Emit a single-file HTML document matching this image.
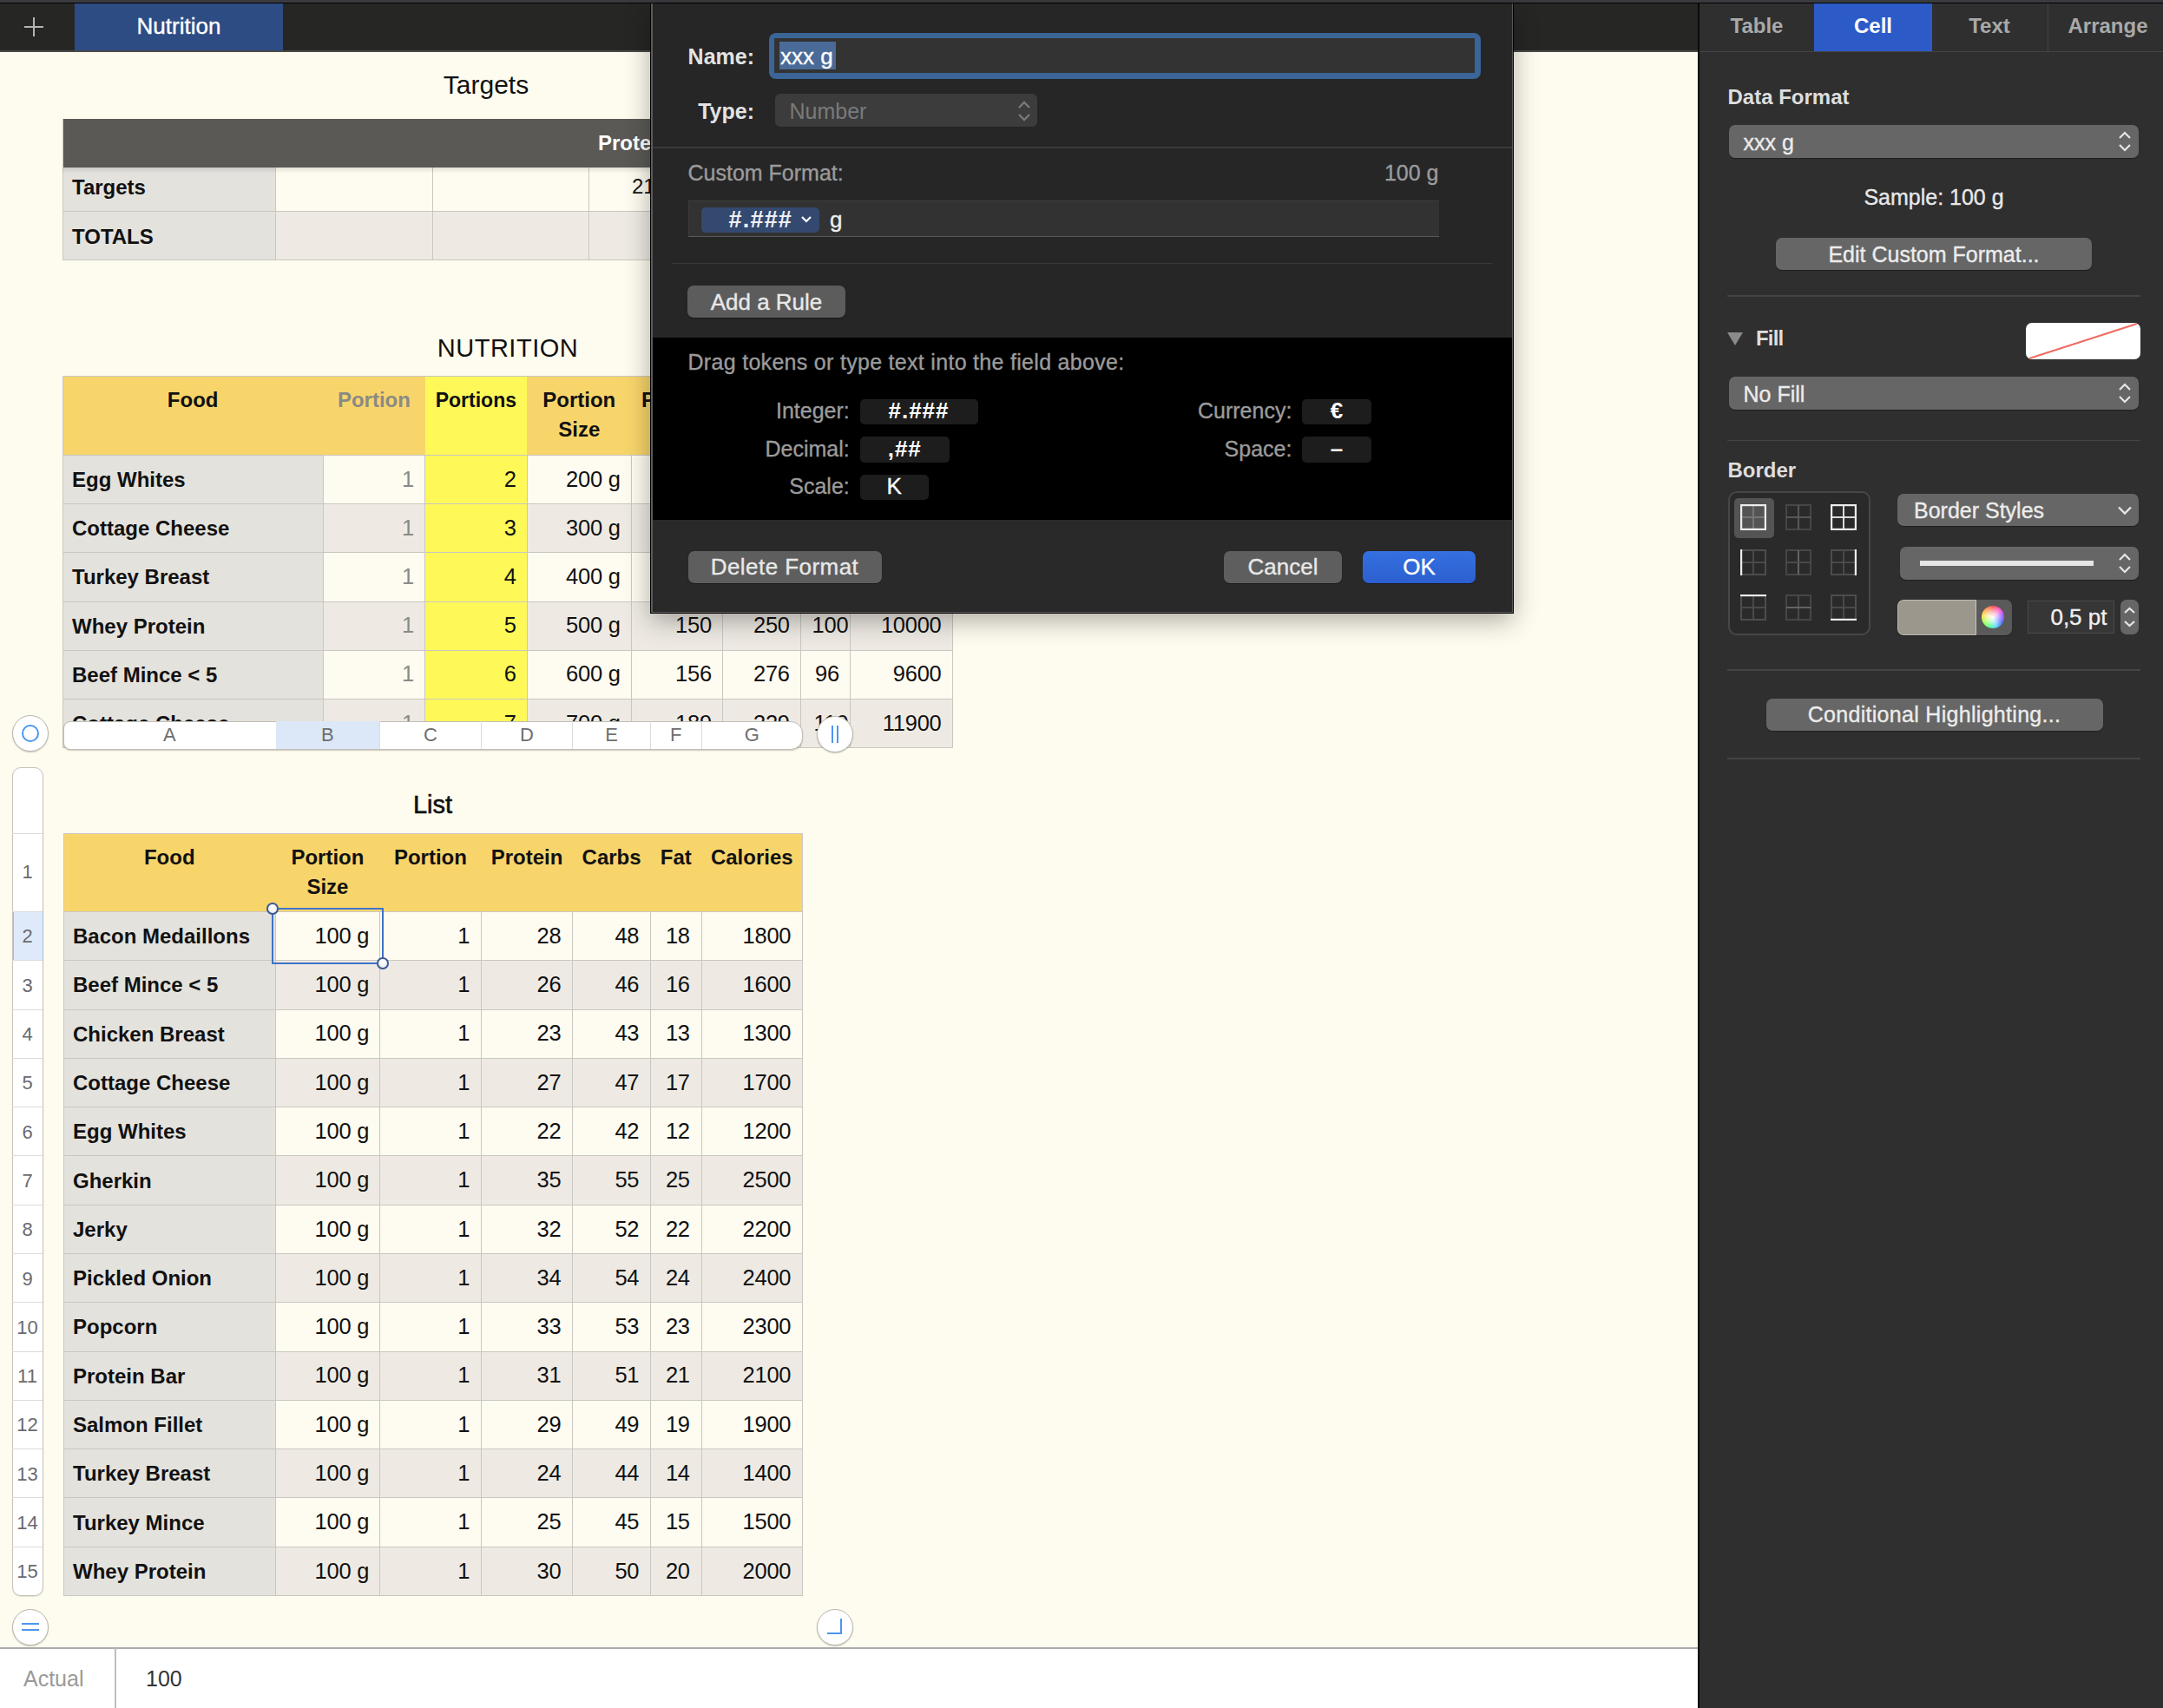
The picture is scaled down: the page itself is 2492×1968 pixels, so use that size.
<!DOCTYPE html><html><head><meta charset="utf-8"><style>
html,body{margin:0;padding:0;}
body{width:2492px;height:1968px;position:relative;overflow:hidden;background:#fefbef;font-family:"Liberation Sans", sans-serif;}
</style></head><body>
<div style="position:absolute;left:0.00px;top:0.00px;width:2492.00px;height:3.00px;background:#3a3b3e;"></div>
<div style="position:absolute;left:0.00px;top:3.00px;width:2492.00px;height:1.00px;background:#000;"></div>
<div style="position:absolute;left:0.00px;top:4.00px;width:1956.00px;height:54.00px;background:#262624;"></div>
<div style="position:absolute;left:0.00px;top:58.00px;width:1956.00px;height:1.50px;background:#4a4a4a;"></div>
<div style="position:absolute;left:28.00px;top:30.00px;width:22.00px;height:2.00px;background:#b5b5b5;"></div>
<div style="position:absolute;left:38.00px;top:20.00px;width:2.00px;height:22.00px;background:#b5b5b5;"></div>
<div style="position:absolute;left:86.00px;top:4.00px;width:240.00px;height:54.00px;background:#2d4c84;"></div>
<div style="position:absolute;left:-794.00px;width:2000px;text-align:center;top:16.99px;font-size:26px;line-height:26px;font-weight:400;color:#fff;white-space:pre;-webkit-text-stroke:0.35px #fff;">Nutrition</div>
<div style="position:absolute;left:-440.00px;width:2000px;text-align:center;top:83.11px;font-size:30px;line-height:30px;font-weight:400;color:#111;white-space:pre;">Targets</div>
<div style="position:absolute;left:72.00px;top:137.00px;width:828.00px;height:56.00px;background:#5a5955;"></div>
<div style="position:absolute;left:72.00px;top:193.00px;width:245.00px;height:106.50px;background:#e4e2dd;"></div>
<div style="position:absolute;left:317.00px;top:193.00px;width:583.00px;height:50.00px;background:#fefbf0;"></div>
<div style="position:absolute;left:317.00px;top:243.00px;width:583.00px;height:56.50px;background:#eeeae3;"></div>
<div style="position:absolute;left:72.00px;top:243.00px;width:828.00px;height:1.00px;background:#c9c7c1;"></div>
<div style="position:absolute;left:72.00px;top:298.50px;width:828.00px;height:1.00px;background:#c9c7c1;"></div>
<div style="position:absolute;left:317.00px;top:193.00px;width:1.00px;height:106.50px;background:#c9c7c1;"></div>
<div style="position:absolute;left:497.50px;top:193.00px;width:1.00px;height:106.50px;background:#c9c7c1;"></div>
<div style="position:absolute;left:677.50px;top:193.00px;width:1.00px;height:106.50px;background:#c9c7c1;"></div>
<div style="position:absolute;left:72.00px;top:137.00px;width:1.00px;height:162.50px;background:#c9c7c1;"></div>
<div style="position:absolute;left:72.00px;top:193.00px;width:828.00px;height:7.00px;background:linear-gradient(rgba(0,0,0,0.10),rgba(0,0,0,0));"></div>
<div style="position:absolute;left:83.00px;top:204.38px;font-size:24px;line-height:24px;font-weight:700;color:#111;white-space:pre;">Targets</div>
<div style="position:absolute;left:83.00px;top:260.68px;font-size:24px;line-height:24px;font-weight:700;color:#111;white-space:pre;">TOTALS</div>
<div style="position:absolute;left:689.00px;top:152.68px;font-size:24px;line-height:24px;font-weight:700;color:#fff;white-space:pre;">Protein</div>
<div style="position:absolute;left:728.00px;top:203.18px;font-size:24px;line-height:24px;font-weight:400;color:#111;white-space:pre;">2100</div>
<div style="position:absolute;left:-415.00px;width:2000px;text-align:center;top:386.95px;font-size:29px;line-height:29px;font-weight:400;color:#111;white-space:pre;letter-spacing:0.5px;">NUTRITION</div>
<div style="position:absolute;left:72.00px;top:433.00px;width:1025.20px;height:91.50px;background:#f8d56b;"></div>
<div style="position:absolute;left:489.50px;top:433.00px;width:117.70px;height:428.80px;background:#fef958;"></div>
<div style="position:absolute;left:72.00px;top:524.50px;width:300.30px;height:55.80px;background:#e4e2dd;"></div>
<div style="position:absolute;left:372.30px;top:524.50px;width:117.20px;height:55.80px;background:#fefbf0;"></div>
<div style="position:absolute;left:607.20px;top:524.50px;width:490.00px;height:55.80px;background:#fefbf0;"></div>
<div style="position:absolute;left:72.00px;top:580.30px;width:300.30px;height:56.20px;background:#e4e2dd;"></div>
<div style="position:absolute;left:372.30px;top:580.30px;width:117.20px;height:56.20px;background:#eeeae3;"></div>
<div style="position:absolute;left:607.20px;top:580.30px;width:490.00px;height:56.20px;background:#eeeae3;"></div>
<div style="position:absolute;left:72.00px;top:636.50px;width:300.30px;height:56.50px;background:#e4e2dd;"></div>
<div style="position:absolute;left:372.30px;top:636.50px;width:117.20px;height:56.50px;background:#fefbf0;"></div>
<div style="position:absolute;left:607.20px;top:636.50px;width:490.00px;height:56.50px;background:#fefbf0;"></div>
<div style="position:absolute;left:72.00px;top:693.00px;width:300.30px;height:56.10px;background:#e4e2dd;"></div>
<div style="position:absolute;left:372.30px;top:693.00px;width:117.20px;height:56.10px;background:#eeeae3;"></div>
<div style="position:absolute;left:607.20px;top:693.00px;width:490.00px;height:56.10px;background:#eeeae3;"></div>
<div style="position:absolute;left:72.00px;top:749.10px;width:300.30px;height:56.20px;background:#e4e2dd;"></div>
<div style="position:absolute;left:372.30px;top:749.10px;width:117.20px;height:56.20px;background:#fefbf0;"></div>
<div style="position:absolute;left:607.20px;top:749.10px;width:490.00px;height:56.20px;background:#fefbf0;"></div>
<div style="position:absolute;left:72.00px;top:805.30px;width:300.30px;height:56.50px;background:#e4e2dd;"></div>
<div style="position:absolute;left:372.30px;top:805.30px;width:117.20px;height:56.50px;background:#eeeae3;"></div>
<div style="position:absolute;left:607.20px;top:805.30px;width:490.00px;height:56.50px;background:#eeeae3;"></div>
<div style="position:absolute;left:72.00px;top:433.00px;width:1025.20px;height:1.00px;background:#c9c7c1;"></div>
<div style="position:absolute;left:72.00px;top:524.00px;width:1025.20px;height:1.00px;background:#c9c7c1;"></div>
<div style="position:absolute;left:72.00px;top:579.80px;width:1025.20px;height:1.00px;background:#c9c7c1;"></div>
<div style="position:absolute;left:72.00px;top:636.00px;width:1025.20px;height:1.00px;background:#c9c7c1;"></div>
<div style="position:absolute;left:72.00px;top:692.50px;width:1025.20px;height:1.00px;background:#c9c7c1;"></div>
<div style="position:absolute;left:72.00px;top:748.60px;width:1025.20px;height:1.00px;background:#c9c7c1;"></div>
<div style="position:absolute;left:72.00px;top:804.80px;width:1025.20px;height:1.00px;background:#c9c7c1;"></div>
<div style="position:absolute;left:72.00px;top:861.30px;width:1025.20px;height:1.00px;background:#c9c7c1;"></div>
<div style="position:absolute;left:71.50px;top:524.50px;width:1.00px;height:337.30px;background:#c9c7c1;"></div>
<div style="position:absolute;left:371.80px;top:524.50px;width:1.00px;height:337.30px;background:#c9c7c1;"></div>
<div style="position:absolute;left:489.00px;top:524.50px;width:1.00px;height:337.30px;background:#c9c7c1;"></div>
<div style="position:absolute;left:606.70px;top:524.50px;width:1.00px;height:337.30px;background:#c9c7c1;"></div>
<div style="position:absolute;left:726.80px;top:524.50px;width:1.00px;height:337.30px;background:#c9c7c1;"></div>
<div style="position:absolute;left:832.00px;top:524.50px;width:1.00px;height:337.30px;background:#c9c7c1;"></div>
<div style="position:absolute;left:921.90px;top:524.50px;width:1.00px;height:337.30px;background:#c9c7c1;"></div>
<div style="position:absolute;left:979.10px;top:524.50px;width:1.00px;height:337.30px;background:#c9c7c1;"></div>
<div style="position:absolute;left:1096.70px;top:524.50px;width:1.00px;height:337.30px;background:#c9c7c1;"></div>
<div style="position:absolute;left:71.50px;top:433.00px;width:1.00px;height:91.50px;background:#c9c7c1;"></div>
<div style="position:absolute;left:1096.70px;top:433.00px;width:1.00px;height:91.50px;background:#c9c7c1;"></div>
<div style="position:absolute;left:-777.85px;width:2000px;text-align:center;top:448.68px;font-size:24px;line-height:24px;font-weight:700;color:#111;white-space:pre;">Food</div>
<div style="position:absolute;left:-569.10px;width:2000px;text-align:center;top:448.68px;font-size:24px;line-height:24px;font-weight:700;color:#8a8a86;white-space:pre;">Portion</div>
<div style="position:absolute;left:-451.65px;width:2000px;text-align:center;top:449.53px;font-size:23px;line-height:23px;font-weight:700;color:#111;white-space:pre;">Portions</div>
<div style="position:absolute;left:-332.75px;width:2000px;text-align:center;top:448.68px;font-size:24px;line-height:24px;font-weight:700;color:#111;white-space:pre;">Portion</div>
<div style="position:absolute;left:-332.75px;width:2000px;text-align:center;top:482.68px;font-size:24px;line-height:24px;font-weight:700;color:#111;white-space:pre;">Size</div>
<div style="position:absolute;left:739.00px;top:448.68px;font-size:24px;line-height:24px;font-weight:700;color:#111;white-space:pre;">P</div>
<div style="position:absolute;left:83.00px;top:540.88px;font-size:24px;line-height:24px;font-weight:700;color:#111;white-space:pre;">Egg Whites</div>
<div style="position:absolute;left:-523.15px;width:1000px;text-align:right;top:539.61px;font-size:25.5px;line-height:25.5px;font-weight:400;color:#8a8a86;white-space:pre;letter-spacing:-0.25px;">1</div>
<div style="position:absolute;left:-405.45px;width:1000px;text-align:right;top:539.61px;font-size:25.5px;line-height:25.5px;font-weight:400;color:#111;white-space:pre;letter-spacing:-0.25px;">2</div>
<div style="position:absolute;left:-285.35px;width:1000px;text-align:right;top:539.61px;font-size:25.5px;line-height:25.5px;font-weight:400;color:#111;white-space:pre;letter-spacing:-0.25px;">200 g</div>
<div style="position:absolute;left:83.00px;top:596.88px;font-size:24px;line-height:24px;font-weight:700;color:#111;white-space:pre;">Cottage Cheese</div>
<div style="position:absolute;left:-523.15px;width:1000px;text-align:right;top:595.61px;font-size:25.5px;line-height:25.5px;font-weight:400;color:#8a8a86;white-space:pre;letter-spacing:-0.25px;">1</div>
<div style="position:absolute;left:-405.45px;width:1000px;text-align:right;top:595.61px;font-size:25.5px;line-height:25.5px;font-weight:400;color:#111;white-space:pre;letter-spacing:-0.25px;">3</div>
<div style="position:absolute;left:-285.35px;width:1000px;text-align:right;top:595.61px;font-size:25.5px;line-height:25.5px;font-weight:400;color:#111;white-space:pre;letter-spacing:-0.25px;">300 g</div>
<div style="position:absolute;left:83.00px;top:653.23px;font-size:24px;line-height:24px;font-weight:700;color:#111;white-space:pre;">Turkey Breast</div>
<div style="position:absolute;left:-523.15px;width:1000px;text-align:right;top:651.96px;font-size:25.5px;line-height:25.5px;font-weight:400;color:#8a8a86;white-space:pre;letter-spacing:-0.25px;">1</div>
<div style="position:absolute;left:-405.45px;width:1000px;text-align:right;top:651.96px;font-size:25.5px;line-height:25.5px;font-weight:400;color:#111;white-space:pre;letter-spacing:-0.25px;">4</div>
<div style="position:absolute;left:-285.35px;width:1000px;text-align:right;top:651.96px;font-size:25.5px;line-height:25.5px;font-weight:400;color:#111;white-space:pre;letter-spacing:-0.25px;">400 g</div>
<div style="position:absolute;left:83.00px;top:709.53px;font-size:24px;line-height:24px;font-weight:700;color:#111;white-space:pre;">Whey Protein</div>
<div style="position:absolute;left:-523.15px;width:1000px;text-align:right;top:708.26px;font-size:25.5px;line-height:25.5px;font-weight:400;color:#8a8a86;white-space:pre;letter-spacing:-0.25px;">1</div>
<div style="position:absolute;left:-405.45px;width:1000px;text-align:right;top:708.26px;font-size:25.5px;line-height:25.5px;font-weight:400;color:#111;white-space:pre;letter-spacing:-0.25px;">5</div>
<div style="position:absolute;left:-285.35px;width:1000px;text-align:right;top:708.26px;font-size:25.5px;line-height:25.5px;font-weight:400;color:#111;white-space:pre;letter-spacing:-0.25px;">500 g</div>
<div style="position:absolute;left:-180.15px;width:1000px;text-align:right;top:708.26px;font-size:25.5px;line-height:25.5px;font-weight:400;color:#111;white-space:pre;letter-spacing:-0.25px;">150</div>
<div style="position:absolute;left:-90.25px;width:1000px;text-align:right;top:708.26px;font-size:25.5px;line-height:25.5px;font-weight:400;color:#111;white-space:pre;letter-spacing:-0.25px;">250</div>
<div style="position:absolute;left:-22.65px;width:1000px;text-align:right;top:708.26px;font-size:25.5px;line-height:25.5px;font-weight:400;color:#111;white-space:pre;letter-spacing:-0.25px;">100</div>
<div style="position:absolute;left:84.55px;width:1000px;text-align:right;top:708.26px;font-size:25.5px;line-height:25.5px;font-weight:400;color:#111;white-space:pre;letter-spacing:-0.25px;">10000</div>
<div style="position:absolute;left:83.00px;top:765.68px;font-size:24px;line-height:24px;font-weight:700;color:#111;white-space:pre;">Beef Mince &lt; 5</div>
<div style="position:absolute;left:-523.15px;width:1000px;text-align:right;top:764.41px;font-size:25.5px;line-height:25.5px;font-weight:400;color:#8a8a86;white-space:pre;letter-spacing:-0.25px;">1</div>
<div style="position:absolute;left:-405.45px;width:1000px;text-align:right;top:764.41px;font-size:25.5px;line-height:25.5px;font-weight:400;color:#111;white-space:pre;letter-spacing:-0.25px;">6</div>
<div style="position:absolute;left:-285.35px;width:1000px;text-align:right;top:764.41px;font-size:25.5px;line-height:25.5px;font-weight:400;color:#111;white-space:pre;letter-spacing:-0.25px;">600 g</div>
<div style="position:absolute;left:-180.15px;width:1000px;text-align:right;top:764.41px;font-size:25.5px;line-height:25.5px;font-weight:400;color:#111;white-space:pre;letter-spacing:-0.25px;">156</div>
<div style="position:absolute;left:-90.25px;width:1000px;text-align:right;top:764.41px;font-size:25.5px;line-height:25.5px;font-weight:400;color:#111;white-space:pre;letter-spacing:-0.25px;">276</div>
<div style="position:absolute;left:-33.05px;width:1000px;text-align:right;top:764.41px;font-size:25.5px;line-height:25.5px;font-weight:400;color:#111;white-space:pre;letter-spacing:-0.25px;">96</div>
<div style="position:absolute;left:84.55px;width:1000px;text-align:right;top:764.41px;font-size:25.5px;line-height:25.5px;font-weight:400;color:#111;white-space:pre;letter-spacing:-0.25px;">9600</div>
<div style="position:absolute;left:83.00px;top:822.03px;font-size:24px;line-height:24px;font-weight:700;color:#111;white-space:pre;">Cottage Cheese</div>
<div style="position:absolute;left:-523.15px;width:1000px;text-align:right;top:820.76px;font-size:25.5px;line-height:25.5px;font-weight:400;color:#8a8a86;white-space:pre;letter-spacing:-0.25px;">1</div>
<div style="position:absolute;left:-405.45px;width:1000px;text-align:right;top:820.76px;font-size:25.5px;line-height:25.5px;font-weight:400;color:#111;white-space:pre;letter-spacing:-0.25px;">7</div>
<div style="position:absolute;left:-285.35px;width:1000px;text-align:right;top:820.76px;font-size:25.5px;line-height:25.5px;font-weight:400;color:#111;white-space:pre;letter-spacing:-0.25px;">700 g</div>
<div style="position:absolute;left:-180.15px;width:1000px;text-align:right;top:820.76px;font-size:25.5px;line-height:25.5px;font-weight:400;color:#111;white-space:pre;letter-spacing:-0.25px;">189</div>
<div style="position:absolute;left:-90.25px;width:1000px;text-align:right;top:820.76px;font-size:25.5px;line-height:25.5px;font-weight:400;color:#111;white-space:pre;letter-spacing:-0.25px;">329</div>
<div style="position:absolute;left:-22.65px;width:1000px;text-align:right;top:820.76px;font-size:25.5px;line-height:25.5px;font-weight:400;color:#111;white-space:pre;letter-spacing:-0.25px;">119</div>
<div style="position:absolute;left:84.55px;width:1000px;text-align:right;top:820.76px;font-size:25.5px;line-height:25.5px;font-weight:400;color:#111;white-space:pre;letter-spacing:-0.25px;">11900</div>
<div style="position:absolute;left:72.50px;top:830.50px;width:852.50px;height:33.00px;background:#fff;border-radius:8px 14px 14px 8px;border:1px solid #c2beb5;box-sizing:border-box;box-shadow:0 1px 1.5px rgba(0,0,0,0.2);"></div>
<div style="position:absolute;left:317.50px;top:831.00px;width:119.90px;height:32.00px;background:#dce8f8;"></div>
<div style="position:absolute;left:436.90px;top:831.00px;width:1.00px;height:32.00px;background:#dcdcdc;"></div>
<div style="position:absolute;left:553.90px;top:831.00px;width:1.00px;height:32.00px;background:#dcdcdc;"></div>
<div style="position:absolute;left:659.10px;top:831.00px;width:1.00px;height:32.00px;background:#dcdcdc;"></div>
<div style="position:absolute;left:749.00px;top:831.00px;width:1.00px;height:32.00px;background:#dcdcdc;"></div>
<div style="position:absolute;left:807.50px;top:831.00px;width:1.00px;height:32.00px;background:#dcdcdc;"></div>
<div style="position:absolute;left:-804.75px;width:2000px;text-align:center;top:836.38px;font-size:22px;line-height:22px;font-weight:400;color:#6e6e6e;white-space:pre;">A</div>
<div style="position:absolute;left:-622.55px;width:2000px;text-align:center;top:836.38px;font-size:22px;line-height:22px;font-weight:400;color:#6e6e6e;white-space:pre;">B</div>
<div style="position:absolute;left:-504.10px;width:2000px;text-align:center;top:836.38px;font-size:22px;line-height:22px;font-weight:400;color:#6e6e6e;white-space:pre;">C</div>
<div style="position:absolute;left:-393.00px;width:2000px;text-align:center;top:836.38px;font-size:22px;line-height:22px;font-weight:400;color:#6e6e6e;white-space:pre;">D</div>
<div style="position:absolute;left:-295.45px;width:2000px;text-align:center;top:836.38px;font-size:22px;line-height:22px;font-weight:400;color:#6e6e6e;white-space:pre;">E</div>
<div style="position:absolute;left:-221.25px;width:2000px;text-align:center;top:836.38px;font-size:22px;line-height:22px;font-weight:400;color:#6e6e6e;white-space:pre;">F</div>
<div style="position:absolute;left:-133.75px;width:2000px;text-align:center;top:836.38px;font-size:22px;line-height:22px;font-weight:400;color:#6e6e6e;white-space:pre;">G</div>
<div style="position:absolute;left:14px;top:824px;width:42px;height:42px;box-sizing:border-box;border-radius:50%;background:#fff;border:1px solid #bcb7ad;box-shadow:0 1px 1.5px rgba(0,0,0,0.2);"></div>
<div style="position:absolute;left:25px;top:835px;width:16px;height:16px;border-radius:50%;border:2px solid #4d96ee;"></div>
<div style="position:absolute;left:941px;top:825px;width:42px;height:42px;box-sizing:border-box;border-radius:50%;background:#fff;border:1px solid #bcb7ad;box-shadow:0 1px 1.5px rgba(0,0,0,0.2);"></div>
<div style="position:absolute;left:958.00px;top:836.00px;width:2.00px;height:20.00px;background:#4d96ee;"></div>
<div style="position:absolute;left:964.00px;top:836.00px;width:2.00px;height:20.00px;background:#4d96ee;"></div>
<div style="position:absolute;left:-501.50px;width:2000px;text-align:center;top:913.45px;font-size:29px;line-height:29px;font-weight:400;color:#111;white-space:pre;-webkit-text-stroke:0.6px #111;">List</div>
<div style="position:absolute;left:14px;top:884px;width:36px;height:954.5px;box-sizing:border-box;background:#fff;border-radius:10px;border:1px solid #c6c2b9;box-shadow:0 1px 1px rgba(0,0,0,0.12);"></div>
<div style="position:absolute;left:14.50px;top:1050.00px;width:35.00px;height:56.60px;background:#deeafa;border:1px solid #a9bdd8;box-sizing:border-box;"></div>
<div style="position:absolute;left:14.00px;top:959.50px;width:35.00px;height:1.00px;background:#dcdcdc;"></div>
<div style="position:absolute;left:14.00px;top:1049.50px;width:35.00px;height:1.00px;background:#dcdcdc;"></div>
<div style="position:absolute;left:14.00px;top:1106.29px;width:35.00px;height:1.00px;background:#dcdcdc;"></div>
<div style="position:absolute;left:14.00px;top:1162.58px;width:35.00px;height:1.00px;background:#dcdcdc;"></div>
<div style="position:absolute;left:14.00px;top:1218.87px;width:35.00px;height:1.00px;background:#dcdcdc;"></div>
<div style="position:absolute;left:14.00px;top:1275.16px;width:35.00px;height:1.00px;background:#dcdcdc;"></div>
<div style="position:absolute;left:14.00px;top:1331.45px;width:35.00px;height:1.00px;background:#dcdcdc;"></div>
<div style="position:absolute;left:14.00px;top:1387.74px;width:35.00px;height:1.00px;background:#dcdcdc;"></div>
<div style="position:absolute;left:14.00px;top:1444.03px;width:35.00px;height:1.00px;background:#dcdcdc;"></div>
<div style="position:absolute;left:14.00px;top:1500.32px;width:35.00px;height:1.00px;background:#dcdcdc;"></div>
<div style="position:absolute;left:14.00px;top:1556.61px;width:35.00px;height:1.00px;background:#dcdcdc;"></div>
<div style="position:absolute;left:14.00px;top:1612.90px;width:35.00px;height:1.00px;background:#dcdcdc;"></div>
<div style="position:absolute;left:14.00px;top:1669.19px;width:35.00px;height:1.00px;background:#dcdcdc;"></div>
<div style="position:absolute;left:14.00px;top:1725.48px;width:35.00px;height:1.00px;background:#dcdcdc;"></div>
<div style="position:absolute;left:14.00px;top:1781.77px;width:35.00px;height:1.00px;background:#dcdcdc;"></div>
<div style="position:absolute;left:-968.50px;width:2000px;text-align:center;top:994.38px;font-size:22px;line-height:22px;font-weight:400;color:#6a6a70;white-space:pre;">1</div>
<div style="position:absolute;left:-968.50px;width:2000px;text-align:center;top:1068.27px;font-size:22px;line-height:22px;font-weight:400;color:#6a6a70;white-space:pre;">2</div>
<div style="position:absolute;left:-968.50px;width:2000px;text-align:center;top:1124.81px;font-size:22px;line-height:22px;font-weight:400;color:#6a6a70;white-space:pre;">3</div>
<div style="position:absolute;left:-968.50px;width:2000px;text-align:center;top:1181.10px;font-size:22px;line-height:22px;font-weight:400;color:#6a6a70;white-space:pre;">4</div>
<div style="position:absolute;left:-968.50px;width:2000px;text-align:center;top:1237.39px;font-size:22px;line-height:22px;font-weight:400;color:#6a6a70;white-space:pre;">5</div>
<div style="position:absolute;left:-968.50px;width:2000px;text-align:center;top:1293.68px;font-size:22px;line-height:22px;font-weight:400;color:#6a6a70;white-space:pre;">6</div>
<div style="position:absolute;left:-968.50px;width:2000px;text-align:center;top:1349.97px;font-size:22px;line-height:22px;font-weight:400;color:#6a6a70;white-space:pre;">7</div>
<div style="position:absolute;left:-968.50px;width:2000px;text-align:center;top:1406.26px;font-size:22px;line-height:22px;font-weight:400;color:#6a6a70;white-space:pre;">8</div>
<div style="position:absolute;left:-968.50px;width:2000px;text-align:center;top:1462.55px;font-size:22px;line-height:22px;font-weight:400;color:#6a6a70;white-space:pre;">9</div>
<div style="position:absolute;left:-968.50px;width:2000px;text-align:center;top:1518.84px;font-size:22px;line-height:22px;font-weight:400;color:#6a6a70;white-space:pre;">10</div>
<div style="position:absolute;left:-968.50px;width:2000px;text-align:center;top:1575.13px;font-size:22px;line-height:22px;font-weight:400;color:#6a6a70;white-space:pre;">11</div>
<div style="position:absolute;left:-968.50px;width:2000px;text-align:center;top:1631.42px;font-size:22px;line-height:22px;font-weight:400;color:#6a6a70;white-space:pre;">12</div>
<div style="position:absolute;left:-968.50px;width:2000px;text-align:center;top:1687.71px;font-size:22px;line-height:22px;font-weight:400;color:#6a6a70;white-space:pre;">13</div>
<div style="position:absolute;left:-968.50px;width:2000px;text-align:center;top:1744.00px;font-size:22px;line-height:22px;font-weight:400;color:#6a6a70;white-space:pre;">14</div>
<div style="position:absolute;left:-968.50px;width:2000px;text-align:center;top:1800.29px;font-size:22px;line-height:22px;font-weight:400;color:#6a6a70;white-space:pre;">15</div>
<div style="position:absolute;left:73.00px;top:960.00px;width:851.50px;height:90.00px;background:#f8d56b;"></div>
<div style="position:absolute;left:73.00px;top:1050.00px;width:244.50px;height:56.79px;background:#e4e2dd;"></div>
<div style="position:absolute;left:317.50px;top:1050.00px;width:607.00px;height:56.79px;background:#fefbf0;"></div>
<div style="position:absolute;left:73.00px;top:1106.79px;width:244.50px;height:56.29px;background:#e4e2dd;"></div>
<div style="position:absolute;left:317.50px;top:1106.79px;width:607.00px;height:56.29px;background:#eeeae3;"></div>
<div style="position:absolute;left:73.00px;top:1163.08px;width:244.50px;height:56.29px;background:#e4e2dd;"></div>
<div style="position:absolute;left:317.50px;top:1163.08px;width:607.00px;height:56.29px;background:#fefbf0;"></div>
<div style="position:absolute;left:73.00px;top:1219.37px;width:244.50px;height:56.29px;background:#e4e2dd;"></div>
<div style="position:absolute;left:317.50px;top:1219.37px;width:607.00px;height:56.29px;background:#eeeae3;"></div>
<div style="position:absolute;left:73.00px;top:1275.66px;width:244.50px;height:56.29px;background:#e4e2dd;"></div>
<div style="position:absolute;left:317.50px;top:1275.66px;width:607.00px;height:56.29px;background:#fefbf0;"></div>
<div style="position:absolute;left:73.00px;top:1331.95px;width:244.50px;height:56.29px;background:#e4e2dd;"></div>
<div style="position:absolute;left:317.50px;top:1331.95px;width:607.00px;height:56.29px;background:#eeeae3;"></div>
<div style="position:absolute;left:73.00px;top:1388.24px;width:244.50px;height:56.29px;background:#e4e2dd;"></div>
<div style="position:absolute;left:317.50px;top:1388.24px;width:607.00px;height:56.29px;background:#fefbf0;"></div>
<div style="position:absolute;left:73.00px;top:1444.53px;width:244.50px;height:56.29px;background:#e4e2dd;"></div>
<div style="position:absolute;left:317.50px;top:1444.53px;width:607.00px;height:56.29px;background:#eeeae3;"></div>
<div style="position:absolute;left:73.00px;top:1500.82px;width:244.50px;height:56.29px;background:#e4e2dd;"></div>
<div style="position:absolute;left:317.50px;top:1500.82px;width:607.00px;height:56.29px;background:#fefbf0;"></div>
<div style="position:absolute;left:73.00px;top:1557.11px;width:244.50px;height:56.29px;background:#e4e2dd;"></div>
<div style="position:absolute;left:317.50px;top:1557.11px;width:607.00px;height:56.29px;background:#eeeae3;"></div>
<div style="position:absolute;left:73.00px;top:1613.40px;width:244.50px;height:56.29px;background:#e4e2dd;"></div>
<div style="position:absolute;left:317.50px;top:1613.40px;width:607.00px;height:56.29px;background:#fefbf0;"></div>
<div style="position:absolute;left:73.00px;top:1669.69px;width:244.50px;height:56.29px;background:#e4e2dd;"></div>
<div style="position:absolute;left:317.50px;top:1669.69px;width:607.00px;height:56.29px;background:#eeeae3;"></div>
<div style="position:absolute;left:73.00px;top:1725.98px;width:244.50px;height:56.29px;background:#e4e2dd;"></div>
<div style="position:absolute;left:317.50px;top:1725.98px;width:607.00px;height:56.29px;background:#fefbf0;"></div>
<div style="position:absolute;left:73.00px;top:1782.27px;width:244.50px;height:56.29px;background:#e4e2dd;"></div>
<div style="position:absolute;left:317.50px;top:1782.27px;width:607.00px;height:56.29px;background:#eeeae3;"></div>
<div style="position:absolute;left:73.00px;top:959.50px;width:851.50px;height:1.00px;background:#c9c7c1;"></div>
<div style="position:absolute;left:73.00px;top:1049.50px;width:851.50px;height:1.00px;background:#c9c7c1;"></div>
<div style="position:absolute;left:73.00px;top:1106.29px;width:851.50px;height:1.00px;background:#c9c7c1;"></div>
<div style="position:absolute;left:73.00px;top:1162.58px;width:851.50px;height:1.00px;background:#c9c7c1;"></div>
<div style="position:absolute;left:73.00px;top:1218.87px;width:851.50px;height:1.00px;background:#c9c7c1;"></div>
<div style="position:absolute;left:73.00px;top:1275.16px;width:851.50px;height:1.00px;background:#c9c7c1;"></div>
<div style="position:absolute;left:73.00px;top:1331.45px;width:851.50px;height:1.00px;background:#c9c7c1;"></div>
<div style="position:absolute;left:73.00px;top:1387.74px;width:851.50px;height:1.00px;background:#c9c7c1;"></div>
<div style="position:absolute;left:73.00px;top:1444.03px;width:851.50px;height:1.00px;background:#c9c7c1;"></div>
<div style="position:absolute;left:73.00px;top:1500.32px;width:851.50px;height:1.00px;background:#c9c7c1;"></div>
<div style="position:absolute;left:73.00px;top:1556.61px;width:851.50px;height:1.00px;background:#c9c7c1;"></div>
<div style="position:absolute;left:73.00px;top:1612.90px;width:851.50px;height:1.00px;background:#c9c7c1;"></div>
<div style="position:absolute;left:73.00px;top:1669.19px;width:851.50px;height:1.00px;background:#c9c7c1;"></div>
<div style="position:absolute;left:73.00px;top:1725.48px;width:851.50px;height:1.00px;background:#c9c7c1;"></div>
<div style="position:absolute;left:73.00px;top:1781.77px;width:851.50px;height:1.00px;background:#c9c7c1;"></div>
<div style="position:absolute;left:73.00px;top:1838.06px;width:851.50px;height:1.00px;background:#c9c7c1;"></div>
<div style="position:absolute;left:72.50px;top:1050.00px;width:1.00px;height:789.06px;background:#c9c7c1;"></div>
<div style="position:absolute;left:317.00px;top:1050.00px;width:1.00px;height:789.06px;background:#c9c7c1;"></div>
<div style="position:absolute;left:436.90px;top:1050.00px;width:1.00px;height:789.06px;background:#c9c7c1;"></div>
<div style="position:absolute;left:553.90px;top:1050.00px;width:1.00px;height:789.06px;background:#c9c7c1;"></div>
<div style="position:absolute;left:659.10px;top:1050.00px;width:1.00px;height:789.06px;background:#c9c7c1;"></div>
<div style="position:absolute;left:749.00px;top:1050.00px;width:1.00px;height:789.06px;background:#c9c7c1;"></div>
<div style="position:absolute;left:807.50px;top:1050.00px;width:1.00px;height:789.06px;background:#c9c7c1;"></div>
<div style="position:absolute;left:924.00px;top:1050.00px;width:1.00px;height:789.06px;background:#c9c7c1;"></div>
<div style="position:absolute;left:72.50px;top:960.00px;width:1.00px;height:90.00px;background:#c9c7c1;"></div>
<div style="position:absolute;left:924.00px;top:960.00px;width:1.00px;height:90.00px;background:#c9c7c1;"></div>
<div style="position:absolute;left:-804.75px;width:2000px;text-align:center;top:976.28px;font-size:24px;line-height:24px;font-weight:700;color:#111;white-space:pre;">Food</div>
<div style="position:absolute;left:-622.55px;width:2000px;text-align:center;top:976.28px;font-size:24px;line-height:24px;font-weight:700;color:#111;white-space:pre;">Portion</div>
<div style="position:absolute;left:-622.55px;width:2000px;text-align:center;top:1010.28px;font-size:24px;line-height:24px;font-weight:700;color:#111;white-space:pre;">Size</div>
<div style="position:absolute;left:-504.10px;width:2000px;text-align:center;top:976.28px;font-size:24px;line-height:24px;font-weight:700;color:#111;white-space:pre;">Portion</div>
<div style="position:absolute;left:-393.00px;width:2000px;text-align:center;top:976.28px;font-size:24px;line-height:24px;font-weight:700;color:#111;white-space:pre;">Protein</div>
<div style="position:absolute;left:-295.45px;width:2000px;text-align:center;top:976.28px;font-size:24px;line-height:24px;font-weight:700;color:#111;white-space:pre;">Carbs</div>
<div style="position:absolute;left:-221.25px;width:2000px;text-align:center;top:976.28px;font-size:24px;line-height:24px;font-weight:700;color:#111;white-space:pre;">Fat</div>
<div style="position:absolute;left:-133.75px;width:2000px;text-align:center;top:976.28px;font-size:24px;line-height:24px;font-weight:700;color:#111;white-space:pre;">Calories</div>
<div style="position:absolute;left:84.00px;top:1066.88px;font-size:24px;line-height:24px;font-weight:700;color:#111;white-space:pre;">Bacon Medaillons</div>
<div style="position:absolute;left:-574.85px;width:1000px;text-align:right;top:1065.61px;font-size:25.5px;line-height:25.5px;font-weight:400;color:#111;white-space:pre;letter-spacing:-0.25px;">100 g</div>
<div style="position:absolute;left:-458.85px;width:1000px;text-align:right;top:1065.61px;font-size:25.5px;line-height:25.5px;font-weight:400;color:#111;white-space:pre;letter-spacing:-0.25px;">1</div>
<div style="position:absolute;left:-353.65px;width:1000px;text-align:right;top:1065.61px;font-size:25.5px;line-height:25.5px;font-weight:400;color:#111;white-space:pre;letter-spacing:-0.25px;">28</div>
<div style="position:absolute;left:-263.75px;width:1000px;text-align:right;top:1065.61px;font-size:25.5px;line-height:25.5px;font-weight:400;color:#111;white-space:pre;letter-spacing:-0.25px;">48</div>
<div style="position:absolute;left:-205.25px;width:1000px;text-align:right;top:1065.61px;font-size:25.5px;line-height:25.5px;font-weight:400;color:#111;white-space:pre;letter-spacing:-0.25px;">18</div>
<div style="position:absolute;left:-88.75px;width:1000px;text-align:right;top:1065.61px;font-size:25.5px;line-height:25.5px;font-weight:400;color:#111;white-space:pre;letter-spacing:-0.25px;">1800</div>
<div style="position:absolute;left:84.00px;top:1123.42px;font-size:24px;line-height:24px;font-weight:700;color:#111;white-space:pre;">Beef Mince &lt; 5</div>
<div style="position:absolute;left:-574.85px;width:1000px;text-align:right;top:1122.15px;font-size:25.5px;line-height:25.5px;font-weight:400;color:#111;white-space:pre;letter-spacing:-0.25px;">100 g</div>
<div style="position:absolute;left:-458.85px;width:1000px;text-align:right;top:1122.15px;font-size:25.5px;line-height:25.5px;font-weight:400;color:#111;white-space:pre;letter-spacing:-0.25px;">1</div>
<div style="position:absolute;left:-353.65px;width:1000px;text-align:right;top:1122.15px;font-size:25.5px;line-height:25.5px;font-weight:400;color:#111;white-space:pre;letter-spacing:-0.25px;">26</div>
<div style="position:absolute;left:-263.75px;width:1000px;text-align:right;top:1122.15px;font-size:25.5px;line-height:25.5px;font-weight:400;color:#111;white-space:pre;letter-spacing:-0.25px;">46</div>
<div style="position:absolute;left:-205.25px;width:1000px;text-align:right;top:1122.15px;font-size:25.5px;line-height:25.5px;font-weight:400;color:#111;white-space:pre;letter-spacing:-0.25px;">16</div>
<div style="position:absolute;left:-88.75px;width:1000px;text-align:right;top:1122.15px;font-size:25.5px;line-height:25.5px;font-weight:400;color:#111;white-space:pre;letter-spacing:-0.25px;">1600</div>
<div style="position:absolute;left:84.00px;top:1179.71px;font-size:24px;line-height:24px;font-weight:700;color:#111;white-space:pre;">Chicken Breast</div>
<div style="position:absolute;left:-574.85px;width:1000px;text-align:right;top:1178.44px;font-size:25.5px;line-height:25.5px;font-weight:400;color:#111;white-space:pre;letter-spacing:-0.25px;">100 g</div>
<div style="position:absolute;left:-458.85px;width:1000px;text-align:right;top:1178.44px;font-size:25.5px;line-height:25.5px;font-weight:400;color:#111;white-space:pre;letter-spacing:-0.25px;">1</div>
<div style="position:absolute;left:-353.65px;width:1000px;text-align:right;top:1178.44px;font-size:25.5px;line-height:25.5px;font-weight:400;color:#111;white-space:pre;letter-spacing:-0.25px;">23</div>
<div style="position:absolute;left:-263.75px;width:1000px;text-align:right;top:1178.44px;font-size:25.5px;line-height:25.5px;font-weight:400;color:#111;white-space:pre;letter-spacing:-0.25px;">43</div>
<div style="position:absolute;left:-205.25px;width:1000px;text-align:right;top:1178.44px;font-size:25.5px;line-height:25.5px;font-weight:400;color:#111;white-space:pre;letter-spacing:-0.25px;">13</div>
<div style="position:absolute;left:-88.75px;width:1000px;text-align:right;top:1178.44px;font-size:25.5px;line-height:25.5px;font-weight:400;color:#111;white-space:pre;letter-spacing:-0.25px;">1300</div>
<div style="position:absolute;left:84.00px;top:1236.00px;font-size:24px;line-height:24px;font-weight:700;color:#111;white-space:pre;">Cottage Cheese</div>
<div style="position:absolute;left:-574.85px;width:1000px;text-align:right;top:1234.73px;font-size:25.5px;line-height:25.5px;font-weight:400;color:#111;white-space:pre;letter-spacing:-0.25px;">100 g</div>
<div style="position:absolute;left:-458.85px;width:1000px;text-align:right;top:1234.73px;font-size:25.5px;line-height:25.5px;font-weight:400;color:#111;white-space:pre;letter-spacing:-0.25px;">1</div>
<div style="position:absolute;left:-353.65px;width:1000px;text-align:right;top:1234.73px;font-size:25.5px;line-height:25.5px;font-weight:400;color:#111;white-space:pre;letter-spacing:-0.25px;">27</div>
<div style="position:absolute;left:-263.75px;width:1000px;text-align:right;top:1234.73px;font-size:25.5px;line-height:25.5px;font-weight:400;color:#111;white-space:pre;letter-spacing:-0.25px;">47</div>
<div style="position:absolute;left:-205.25px;width:1000px;text-align:right;top:1234.73px;font-size:25.5px;line-height:25.5px;font-weight:400;color:#111;white-space:pre;letter-spacing:-0.25px;">17</div>
<div style="position:absolute;left:-88.75px;width:1000px;text-align:right;top:1234.73px;font-size:25.5px;line-height:25.5px;font-weight:400;color:#111;white-space:pre;letter-spacing:-0.25px;">1700</div>
<div style="position:absolute;left:84.00px;top:1292.29px;font-size:24px;line-height:24px;font-weight:700;color:#111;white-space:pre;">Egg Whites</div>
<div style="position:absolute;left:-574.85px;width:1000px;text-align:right;top:1291.02px;font-size:25.5px;line-height:25.5px;font-weight:400;color:#111;white-space:pre;letter-spacing:-0.25px;">100 g</div>
<div style="position:absolute;left:-458.85px;width:1000px;text-align:right;top:1291.02px;font-size:25.5px;line-height:25.5px;font-weight:400;color:#111;white-space:pre;letter-spacing:-0.25px;">1</div>
<div style="position:absolute;left:-353.65px;width:1000px;text-align:right;top:1291.02px;font-size:25.5px;line-height:25.5px;font-weight:400;color:#111;white-space:pre;letter-spacing:-0.25px;">22</div>
<div style="position:absolute;left:-263.75px;width:1000px;text-align:right;top:1291.02px;font-size:25.5px;line-height:25.5px;font-weight:400;color:#111;white-space:pre;letter-spacing:-0.25px;">42</div>
<div style="position:absolute;left:-205.25px;width:1000px;text-align:right;top:1291.02px;font-size:25.5px;line-height:25.5px;font-weight:400;color:#111;white-space:pre;letter-spacing:-0.25px;">12</div>
<div style="position:absolute;left:-88.75px;width:1000px;text-align:right;top:1291.02px;font-size:25.5px;line-height:25.5px;font-weight:400;color:#111;white-space:pre;letter-spacing:-0.25px;">1200</div>
<div style="position:absolute;left:84.00px;top:1348.58px;font-size:24px;line-height:24px;font-weight:700;color:#111;white-space:pre;">Gherkin</div>
<div style="position:absolute;left:-574.85px;width:1000px;text-align:right;top:1347.31px;font-size:25.5px;line-height:25.5px;font-weight:400;color:#111;white-space:pre;letter-spacing:-0.25px;">100 g</div>
<div style="position:absolute;left:-458.85px;width:1000px;text-align:right;top:1347.31px;font-size:25.5px;line-height:25.5px;font-weight:400;color:#111;white-space:pre;letter-spacing:-0.25px;">1</div>
<div style="position:absolute;left:-353.65px;width:1000px;text-align:right;top:1347.31px;font-size:25.5px;line-height:25.5px;font-weight:400;color:#111;white-space:pre;letter-spacing:-0.25px;">35</div>
<div style="position:absolute;left:-263.75px;width:1000px;text-align:right;top:1347.31px;font-size:25.5px;line-height:25.5px;font-weight:400;color:#111;white-space:pre;letter-spacing:-0.25px;">55</div>
<div style="position:absolute;left:-205.25px;width:1000px;text-align:right;top:1347.31px;font-size:25.5px;line-height:25.5px;font-weight:400;color:#111;white-space:pre;letter-spacing:-0.25px;">25</div>
<div style="position:absolute;left:-88.75px;width:1000px;text-align:right;top:1347.31px;font-size:25.5px;line-height:25.5px;font-weight:400;color:#111;white-space:pre;letter-spacing:-0.25px;">2500</div>
<div style="position:absolute;left:84.00px;top:1404.87px;font-size:24px;line-height:24px;font-weight:700;color:#111;white-space:pre;">Jerky</div>
<div style="position:absolute;left:-574.85px;width:1000px;text-align:right;top:1403.60px;font-size:25.5px;line-height:25.5px;font-weight:400;color:#111;white-space:pre;letter-spacing:-0.25px;">100 g</div>
<div style="position:absolute;left:-458.85px;width:1000px;text-align:right;top:1403.60px;font-size:25.5px;line-height:25.5px;font-weight:400;color:#111;white-space:pre;letter-spacing:-0.25px;">1</div>
<div style="position:absolute;left:-353.65px;width:1000px;text-align:right;top:1403.60px;font-size:25.5px;line-height:25.5px;font-weight:400;color:#111;white-space:pre;letter-spacing:-0.25px;">32</div>
<div style="position:absolute;left:-263.75px;width:1000px;text-align:right;top:1403.60px;font-size:25.5px;line-height:25.5px;font-weight:400;color:#111;white-space:pre;letter-spacing:-0.25px;">52</div>
<div style="position:absolute;left:-205.25px;width:1000px;text-align:right;top:1403.60px;font-size:25.5px;line-height:25.5px;font-weight:400;color:#111;white-space:pre;letter-spacing:-0.25px;">22</div>
<div style="position:absolute;left:-88.75px;width:1000px;text-align:right;top:1403.60px;font-size:25.5px;line-height:25.5px;font-weight:400;color:#111;white-space:pre;letter-spacing:-0.25px;">2200</div>
<div style="position:absolute;left:84.00px;top:1461.16px;font-size:24px;line-height:24px;font-weight:700;color:#111;white-space:pre;">Pickled Onion</div>
<div style="position:absolute;left:-574.85px;width:1000px;text-align:right;top:1459.89px;font-size:25.5px;line-height:25.5px;font-weight:400;color:#111;white-space:pre;letter-spacing:-0.25px;">100 g</div>
<div style="position:absolute;left:-458.85px;width:1000px;text-align:right;top:1459.89px;font-size:25.5px;line-height:25.5px;font-weight:400;color:#111;white-space:pre;letter-spacing:-0.25px;">1</div>
<div style="position:absolute;left:-353.65px;width:1000px;text-align:right;top:1459.89px;font-size:25.5px;line-height:25.5px;font-weight:400;color:#111;white-space:pre;letter-spacing:-0.25px;">34</div>
<div style="position:absolute;left:-263.75px;width:1000px;text-align:right;top:1459.89px;font-size:25.5px;line-height:25.5px;font-weight:400;color:#111;white-space:pre;letter-spacing:-0.25px;">54</div>
<div style="position:absolute;left:-205.25px;width:1000px;text-align:right;top:1459.89px;font-size:25.5px;line-height:25.5px;font-weight:400;color:#111;white-space:pre;letter-spacing:-0.25px;">24</div>
<div style="position:absolute;left:-88.75px;width:1000px;text-align:right;top:1459.89px;font-size:25.5px;line-height:25.5px;font-weight:400;color:#111;white-space:pre;letter-spacing:-0.25px;">2400</div>
<div style="position:absolute;left:84.00px;top:1517.45px;font-size:24px;line-height:24px;font-weight:700;color:#111;white-space:pre;">Popcorn</div>
<div style="position:absolute;left:-574.85px;width:1000px;text-align:right;top:1516.18px;font-size:25.5px;line-height:25.5px;font-weight:400;color:#111;white-space:pre;letter-spacing:-0.25px;">100 g</div>
<div style="position:absolute;left:-458.85px;width:1000px;text-align:right;top:1516.18px;font-size:25.5px;line-height:25.5px;font-weight:400;color:#111;white-space:pre;letter-spacing:-0.25px;">1</div>
<div style="position:absolute;left:-353.65px;width:1000px;text-align:right;top:1516.18px;font-size:25.5px;line-height:25.5px;font-weight:400;color:#111;white-space:pre;letter-spacing:-0.25px;">33</div>
<div style="position:absolute;left:-263.75px;width:1000px;text-align:right;top:1516.18px;font-size:25.5px;line-height:25.5px;font-weight:400;color:#111;white-space:pre;letter-spacing:-0.25px;">53</div>
<div style="position:absolute;left:-205.25px;width:1000px;text-align:right;top:1516.18px;font-size:25.5px;line-height:25.5px;font-weight:400;color:#111;white-space:pre;letter-spacing:-0.25px;">23</div>
<div style="position:absolute;left:-88.75px;width:1000px;text-align:right;top:1516.18px;font-size:25.5px;line-height:25.5px;font-weight:400;color:#111;white-space:pre;letter-spacing:-0.25px;">2300</div>
<div style="position:absolute;left:84.00px;top:1573.74px;font-size:24px;line-height:24px;font-weight:700;color:#111;white-space:pre;">Protein Bar</div>
<div style="position:absolute;left:-574.85px;width:1000px;text-align:right;top:1572.47px;font-size:25.5px;line-height:25.5px;font-weight:400;color:#111;white-space:pre;letter-spacing:-0.25px;">100 g</div>
<div style="position:absolute;left:-458.85px;width:1000px;text-align:right;top:1572.47px;font-size:25.5px;line-height:25.5px;font-weight:400;color:#111;white-space:pre;letter-spacing:-0.25px;">1</div>
<div style="position:absolute;left:-353.65px;width:1000px;text-align:right;top:1572.47px;font-size:25.5px;line-height:25.5px;font-weight:400;color:#111;white-space:pre;letter-spacing:-0.25px;">31</div>
<div style="position:absolute;left:-263.75px;width:1000px;text-align:right;top:1572.47px;font-size:25.5px;line-height:25.5px;font-weight:400;color:#111;white-space:pre;letter-spacing:-0.25px;">51</div>
<div style="position:absolute;left:-205.25px;width:1000px;text-align:right;top:1572.47px;font-size:25.5px;line-height:25.5px;font-weight:400;color:#111;white-space:pre;letter-spacing:-0.25px;">21</div>
<div style="position:absolute;left:-88.75px;width:1000px;text-align:right;top:1572.47px;font-size:25.5px;line-height:25.5px;font-weight:400;color:#111;white-space:pre;letter-spacing:-0.25px;">2100</div>
<div style="position:absolute;left:84.00px;top:1630.03px;font-size:24px;line-height:24px;font-weight:700;color:#111;white-space:pre;">Salmon Fillet</div>
<div style="position:absolute;left:-574.85px;width:1000px;text-align:right;top:1628.76px;font-size:25.5px;line-height:25.5px;font-weight:400;color:#111;white-space:pre;letter-spacing:-0.25px;">100 g</div>
<div style="position:absolute;left:-458.85px;width:1000px;text-align:right;top:1628.76px;font-size:25.5px;line-height:25.5px;font-weight:400;color:#111;white-space:pre;letter-spacing:-0.25px;">1</div>
<div style="position:absolute;left:-353.65px;width:1000px;text-align:right;top:1628.76px;font-size:25.5px;line-height:25.5px;font-weight:400;color:#111;white-space:pre;letter-spacing:-0.25px;">29</div>
<div style="position:absolute;left:-263.75px;width:1000px;text-align:right;top:1628.76px;font-size:25.5px;line-height:25.5px;font-weight:400;color:#111;white-space:pre;letter-spacing:-0.25px;">49</div>
<div style="position:absolute;left:-205.25px;width:1000px;text-align:right;top:1628.76px;font-size:25.5px;line-height:25.5px;font-weight:400;color:#111;white-space:pre;letter-spacing:-0.25px;">19</div>
<div style="position:absolute;left:-88.75px;width:1000px;text-align:right;top:1628.76px;font-size:25.5px;line-height:25.5px;font-weight:400;color:#111;white-space:pre;letter-spacing:-0.25px;">1900</div>
<div style="position:absolute;left:84.00px;top:1686.32px;font-size:24px;line-height:24px;font-weight:700;color:#111;white-space:pre;">Turkey Breast</div>
<div style="position:absolute;left:-574.85px;width:1000px;text-align:right;top:1685.05px;font-size:25.5px;line-height:25.5px;font-weight:400;color:#111;white-space:pre;letter-spacing:-0.25px;">100 g</div>
<div style="position:absolute;left:-458.85px;width:1000px;text-align:right;top:1685.05px;font-size:25.5px;line-height:25.5px;font-weight:400;color:#111;white-space:pre;letter-spacing:-0.25px;">1</div>
<div style="position:absolute;left:-353.65px;width:1000px;text-align:right;top:1685.05px;font-size:25.5px;line-height:25.5px;font-weight:400;color:#111;white-space:pre;letter-spacing:-0.25px;">24</div>
<div style="position:absolute;left:-263.75px;width:1000px;text-align:right;top:1685.05px;font-size:25.5px;line-height:25.5px;font-weight:400;color:#111;white-space:pre;letter-spacing:-0.25px;">44</div>
<div style="position:absolute;left:-205.25px;width:1000px;text-align:right;top:1685.05px;font-size:25.5px;line-height:25.5px;font-weight:400;color:#111;white-space:pre;letter-spacing:-0.25px;">14</div>
<div style="position:absolute;left:-88.75px;width:1000px;text-align:right;top:1685.05px;font-size:25.5px;line-height:25.5px;font-weight:400;color:#111;white-space:pre;letter-spacing:-0.25px;">1400</div>
<div style="position:absolute;left:84.00px;top:1742.61px;font-size:24px;line-height:24px;font-weight:700;color:#111;white-space:pre;">Turkey Mince</div>
<div style="position:absolute;left:-574.85px;width:1000px;text-align:right;top:1741.34px;font-size:25.5px;line-height:25.5px;font-weight:400;color:#111;white-space:pre;letter-spacing:-0.25px;">100 g</div>
<div style="position:absolute;left:-458.85px;width:1000px;text-align:right;top:1741.34px;font-size:25.5px;line-height:25.5px;font-weight:400;color:#111;white-space:pre;letter-spacing:-0.25px;">1</div>
<div style="position:absolute;left:-353.65px;width:1000px;text-align:right;top:1741.34px;font-size:25.5px;line-height:25.5px;font-weight:400;color:#111;white-space:pre;letter-spacing:-0.25px;">25</div>
<div style="position:absolute;left:-263.75px;width:1000px;text-align:right;top:1741.34px;font-size:25.5px;line-height:25.5px;font-weight:400;color:#111;white-space:pre;letter-spacing:-0.25px;">45</div>
<div style="position:absolute;left:-205.25px;width:1000px;text-align:right;top:1741.34px;font-size:25.5px;line-height:25.5px;font-weight:400;color:#111;white-space:pre;letter-spacing:-0.25px;">15</div>
<div style="position:absolute;left:-88.75px;width:1000px;text-align:right;top:1741.34px;font-size:25.5px;line-height:25.5px;font-weight:400;color:#111;white-space:pre;letter-spacing:-0.25px;">1500</div>
<div style="position:absolute;left:84.00px;top:1798.90px;font-size:24px;line-height:24px;font-weight:700;color:#111;white-space:pre;">Whey Protein</div>
<div style="position:absolute;left:-574.85px;width:1000px;text-align:right;top:1797.63px;font-size:25.5px;line-height:25.5px;font-weight:400;color:#111;white-space:pre;letter-spacing:-0.25px;">100 g</div>
<div style="position:absolute;left:-458.85px;width:1000px;text-align:right;top:1797.63px;font-size:25.5px;line-height:25.5px;font-weight:400;color:#111;white-space:pre;letter-spacing:-0.25px;">1</div>
<div style="position:absolute;left:-353.65px;width:1000px;text-align:right;top:1797.63px;font-size:25.5px;line-height:25.5px;font-weight:400;color:#111;white-space:pre;letter-spacing:-0.25px;">30</div>
<div style="position:absolute;left:-263.75px;width:1000px;text-align:right;top:1797.63px;font-size:25.5px;line-height:25.5px;font-weight:400;color:#111;white-space:pre;letter-spacing:-0.25px;">50</div>
<div style="position:absolute;left:-205.25px;width:1000px;text-align:right;top:1797.63px;font-size:25.5px;line-height:25.5px;font-weight:400;color:#111;white-space:pre;letter-spacing:-0.25px;">20</div>
<div style="position:absolute;left:-88.75px;width:1000px;text-align:right;top:1797.63px;font-size:25.5px;line-height:25.5px;font-weight:400;color:#111;white-space:pre;letter-spacing:-0.25px;">2000</div>
<div style="position:absolute;left:313.20px;top:1046.10px;width:128.50px;height:64.50px;box-sizing:border-box;border:2.2px solid #3f73c8;"></div>
<div style="position:absolute;left:307px;top:1040px;width:9.5px;height:9.5px;border-radius:50%;background:radial-gradient(circle at 50% 30%,#fff,#e6e6e6);border:2.2px solid #3d5a98;"></div>
<div style="position:absolute;left:434px;top:1103px;width:9.5px;height:9.5px;border-radius:50%;background:radial-gradient(circle at 50% 30%,#fff,#e6e6e6);border:2.2px solid #3d5a98;"></div>
<div style="position:absolute;left:14px;top:1854px;width:42px;height:42px;box-sizing:border-box;border-radius:50%;background:#fff;border:1px solid #bcb7ad;box-shadow:0 1px 1.5px rgba(0,0,0,0.2);"></div>
<div style="position:absolute;left:25.00px;top:1870.00px;width:20.00px;height:2.00px;background:#4d96ee;"></div>
<div style="position:absolute;left:25.00px;top:1877.00px;width:20.00px;height:2.00px;background:#4d96ee;"></div>
<div style="position:absolute;left:941px;top:1854px;width:42px;height:42px;box-sizing:border-box;border-radius:50%;background:#fff;border:1px solid #bcb7ad;box-shadow:0 1px 1.5px rgba(0,0,0,0.2);"></div>
<div style="position:absolute;left:953.00px;top:1881.00px;width:17.00px;height:2.00px;background:#4d96ee;"></div>
<div style="position:absolute;left:968.00px;top:1865.00px;width:2.00px;height:18.00px;background:#4d96ee;"></div>
<div style="position:absolute;left:0.00px;top:1898.00px;width:1956.00px;height:70.00px;background:#fff;"></div>
<div style="position:absolute;left:0.00px;top:1898.00px;width:1956.00px;height:2.00px;background:#ababab;"></div>
<div style="position:absolute;left:132.00px;top:1899.00px;width:2.00px;height:69.00px;background:#bdbdbd;"></div>
<div style="position:absolute;left:27.00px;top:1921.84px;font-size:25px;line-height:25px;font-weight:400;color:#9a9a9a;white-space:pre;">Actual</div>
<div style="position:absolute;left:168.00px;top:1921.84px;font-size:25px;line-height:25px;font-weight:400;color:#333;white-space:pre;">100</div>
<div style="position:absolute;left:749px;top:4px;width:994px;height:703px;box-shadow:0 8px 28px rgba(0,0,0,0.32);"></div>
<div style="position:absolute;left:749.00px;top:4.00px;width:995.00px;height:703.00px;background:#000;"></div>
<div style="position:absolute;left:750.00px;top:4.00px;width:993.00px;height:702.00px;background:#5a5a5a;"></div>
<div style="position:absolute;left:752.00px;top:4.00px;width:989.50px;height:700.50px;background:#262626;"></div>
<div style="position:absolute;left:752.00px;top:169.00px;width:989.50px;height:1.50px;background:#3a3a3a;"></div>
<div style="position:absolute;left:-131.00px;width:1000px;text-align:right;top:53.34px;font-size:25px;line-height:25px;font-weight:700;color:#e3e3e3;white-space:pre;">Name:</div>
<div style="position:absolute;left:-131.00px;width:1000px;text-align:right;top:115.84px;font-size:25px;line-height:25px;font-weight:700;color:#e3e3e3;white-space:pre;">Type:</div>
<div style="position:absolute;left:885.5px;top:37.5px;width:820px;height:53px;box-sizing:border-box;border-radius:8px;background:#3b6597;"></div>
<div style="position:absolute;left:892.00px;top:44.00px;width:807.00px;height:40.00px;background:#333;"></div>
<div style="position:absolute;left:898.00px;top:48.00px;width:64.50px;height:32.00px;background:#4a6a98;"></div>
<div style="position:absolute;left:899.00px;top:51.99px;font-size:26px;line-height:26px;font-weight:400;color:#fff;white-space:pre;-webkit-text-stroke:0.35px #fff;">xxx g</div>
<div style="position:absolute;left:892.5px;top:108px;width:302px;height:38px;border-radius:6px;background:#3c3c3c;"></div>
<div style="position:absolute;left:909.50px;top:115.84px;font-size:25px;line-height:25px;font-weight:400;color:#7a7a7a;white-space:pre;">Number</div>
<svg style="position:absolute;left:1168.5px;top:113px" width="22" height="30" viewBox="0 0 22 30"><path d="M5 11 L11 5 L17 11 M5 19 L11 25 L17 19" fill="none" stroke="#7a7a7a" stroke-width="2.3"/></svg>
<div style="position:absolute;left:792.50px;top:186.84px;font-size:25px;line-height:25px;font-weight:400;color:#9b9b9b;white-space:pre;-webkit-text-stroke:0.35px #9b9b9b;">Custom Format:</div>
<div style="position:absolute;left:657.50px;width:1000px;text-align:right;top:186.84px;font-size:25px;line-height:25px;font-weight:400;color:#9b9b9b;white-space:pre;-webkit-text-stroke:0.35px #9b9b9b;">100 g</div>
<div style="position:absolute;left:793.00px;top:231.00px;width:864.50px;height:42.00px;background:#323232;border-top:1px solid #404040;border-left:1px solid #3a3a3a;border-bottom:1.5px solid #5a5a5a;box-sizing:border-box;"></div>
<div style="position:absolute;left:808px;top:238.5px;width:136px;height:29.5px;border-radius:5px;background:#34496f;"></div>
<div style="position:absolute;left:839.50px;top:239.64px;font-size:27px;line-height:27px;font-weight:700;color:#eef0f4;white-space:pre;letter-spacing:1.2px;">#.###</div>
<svg style="position:absolute;left:921px;top:247px" width="16" height="12" viewBox="0 0 16 12"><path d="M3 3 L8 8 L13 3" fill="none" stroke="#fff" stroke-width="2.2"/></svg>
<div style="position:absolute;left:956.00px;top:239.99px;font-size:26px;line-height:26px;font-weight:400;color:#eee;white-space:pre;-webkit-text-stroke:0.35px #eee;">g</div>
<div style="position:absolute;left:774.00px;top:302.50px;width:945.00px;height:1.50px;background:#3a3a3a;"></div>
<div style="position:absolute;left:792px;top:329px;width:182px;height:37px;border-radius:7px;background:#5c5c5c;box-shadow:0 1px 1px rgba(0,0,0,0.4);"></div>
<div style="position:absolute;left:-117.00px;width:2000px;text-align:center;top:334.99px;font-size:26px;line-height:26px;font-weight:400;color:#e8e8e8;white-space:pre;-webkit-text-stroke:0.35px #e8e8e8;">Add a Rule</div>
<div style="position:absolute;left:752.00px;top:389.00px;width:989.50px;height:210.00px;background:#000;"></div>
<div style="position:absolute;left:792.50px;top:405.34px;font-size:25px;line-height:25px;font-weight:400;color:#9b9b9b;white-space:pre;letter-spacing:0.3px;-webkit-text-stroke:0.35px #9b9b9b;">Drag tokens or type text into the field above:</div>
<div style="position:absolute;left:-21.25px;width:1000px;text-align:right;top:461.34px;font-size:25px;line-height:25px;font-weight:400;color:#9b9b9b;white-space:pre;-webkit-text-stroke:0.35px #9b9b9b;">Integer:</div>
<div style="position:absolute;left:990.5px;top:459.5px;width:136.0px;height:29.5px;border-radius:5px;background:#1d1d1d;"></div>
<div style="position:absolute;left:58.50px;width:2000px;text-align:center;top:460.49px;font-size:26px;line-height:26px;font-weight:700;color:#fff;white-space:pre;letter-spacing:1px;">#.###</div>
<div style="position:absolute;left:-21.25px;width:1000px;text-align:right;top:504.84px;font-size:25px;line-height:25px;font-weight:400;color:#9b9b9b;white-space:pre;-webkit-text-stroke:0.35px #9b9b9b;">Decimal:</div>
<div style="position:absolute;left:990.5px;top:503px;width:103.5px;height:29.5px;border-radius:5px;background:#1d1d1d;"></div>
<div style="position:absolute;left:42.25px;width:2000px;text-align:center;top:503.99px;font-size:26px;line-height:26px;font-weight:700;color:#fff;white-space:pre;letter-spacing:1px;">,##</div>
<div style="position:absolute;left:-21.25px;width:1000px;text-align:right;top:548.34px;font-size:25px;line-height:25px;font-weight:400;color:#9b9b9b;white-space:pre;-webkit-text-stroke:0.35px #9b9b9b;">Scale:</div>
<div style="position:absolute;left:990.5px;top:546.5px;width:79.5px;height:29.5px;border-radius:5px;background:#1d1d1d;"></div>
<div style="position:absolute;left:30.25px;width:2000px;text-align:center;top:547.49px;font-size:26px;line-height:26px;font-weight:400;color:#fff;white-space:pre;-webkit-text-stroke:0.35px #fff;">K</div>
<div style="position:absolute;left:488.40px;width:1000px;text-align:right;top:461.34px;font-size:25px;line-height:25px;font-weight:400;color:#9b9b9b;white-space:pre;-webkit-text-stroke:0.35px #9b9b9b;">Currency:</div>
<div style="position:absolute;left:1500px;top:459.5px;width:80px;height:29.5px;border-radius:5px;background:#1d1d1d;"></div>
<div style="position:absolute;left:540.00px;width:2000px;text-align:center;top:460.49px;font-size:26px;line-height:26px;font-weight:700;color:#fff;white-space:pre;">€</div>
<div style="position:absolute;left:488.40px;width:1000px;text-align:right;top:504.84px;font-size:25px;line-height:25px;font-weight:400;color:#9b9b9b;white-space:pre;-webkit-text-stroke:0.35px #9b9b9b;">Space:</div>
<div style="position:absolute;left:1500px;top:503px;width:80px;height:29.5px;border-radius:5px;background:#1d1d1d;"></div>
<div style="position:absolute;left:540.00px;width:2000px;text-align:center;top:503.99px;font-size:26px;line-height:26px;font-weight:700;color:#fff;white-space:pre;">–</div>
<div style="position:absolute;left:752.00px;top:599.00px;width:989.50px;height:105.50px;background:#292929;"></div>
<div style="position:absolute;left:792.5px;top:634.5px;width:223.5px;height:37.5px;border-radius:7px;background:#5e5e5e;box-shadow:0 1px 1px rgba(0,0,0,0.4);"></div>
<div style="position:absolute;left:-96.00px;width:2000px;text-align:center;top:640.49px;font-size:26px;line-height:26px;font-weight:400;color:#e8e8e8;white-space:pre;letter-spacing:0.45px;-webkit-text-stroke:0.35px #e8e8e8;">Delete Format</div>
<div style="position:absolute;left:1410px;top:634.5px;width:136px;height:37.5px;border-radius:7px;background:#5e5e5e;box-shadow:0 1px 1px rgba(0,0,0,0.4);"></div>
<div style="position:absolute;left:478.00px;width:2000px;text-align:center;top:640.49px;font-size:26px;line-height:26px;font-weight:400;color:#e8e8e8;white-space:pre;-webkit-text-stroke:0.35px #e8e8e8;">Cancel</div>
<div style="position:absolute;left:1570px;top:634.5px;width:130px;height:37.5px;border-radius:7px;background:linear-gradient(#3470e0,#2c5fd0);box-shadow:0 1px 1px rgba(0,0,0,0.4);"></div>
<div style="position:absolute;left:635.00px;width:2000px;text-align:center;top:640.49px;font-size:26px;line-height:26px;font-weight:400;color:#fff;white-space:pre;-webkit-text-stroke:0.35px #fff;">OK</div>
<div style="position:absolute;left:1956.00px;top:4.00px;width:536.00px;height:1964.00px;background:#2f2f2f;"></div>
<div style="position:absolute;left:1956.00px;top:4.00px;width:2.00px;height:1964.00px;background:#0a0a0a;"></div>
<div style="position:absolute;left:1957.50px;top:58.50px;width:534.50px;height:1.50px;background:#444;"></div>
<div style="position:absolute;left:2090.00px;top:4.00px;width:136.00px;height:55.00px;background:#2c5bc7;"></div>
<div style="position:absolute;left:2358.50px;top:4.00px;width:1.50px;height:54.50px;background:#444;"></div>
<div style="position:absolute;left:1024.00px;width:2000px;text-align:center;top:17.98px;font-size:24px;line-height:24px;font-weight:700;color:#a9a9a9;white-space:pre;">Table</div>
<div style="position:absolute;left:1158.00px;width:2000px;text-align:center;top:17.98px;font-size:24px;line-height:24px;font-weight:700;color:#fff;white-space:pre;">Cell</div>
<div style="position:absolute;left:1292.00px;width:2000px;text-align:center;top:17.98px;font-size:24px;line-height:24px;font-weight:700;color:#a9a9a9;white-space:pre;">Text</div>
<div style="position:absolute;left:1428.50px;width:2000px;text-align:center;top:17.98px;font-size:24px;line-height:24px;font-weight:700;color:#a9a9a9;white-space:pre;">Arrange</div>
<div style="position:absolute;left:1990.50px;top:99.68px;font-size:24px;line-height:24px;font-weight:700;color:#dedede;white-space:pre;">Data Format</div>
<div style="position:absolute;left:1992px;top:144px;width:472px;height:38px;border-radius:7px;background:#666;box-shadow:0 1px 1px rgba(0,0,0,0.35);"></div>
<div style="position:absolute;left:2008.50px;top:151.84px;font-size:25px;line-height:25px;font-weight:400;color:#ececec;white-space:pre;-webkit-text-stroke:0.35px #ececec;">xxx g</div>
<svg style="position:absolute;left:2438px;top:150.0px" width="20" height="26" viewBox="0 0 20 26"><path d="M4 9 L10 3 L16 9 M4 17 L10 23 L16 17" fill="none" stroke="#e6e6e6" stroke-width="2.2"/></svg>
<div style="position:absolute;left:1228.00px;width:2000px;text-align:center;top:214.84px;font-size:25px;line-height:25px;font-weight:400;color:#e8e8e8;white-space:pre;-webkit-text-stroke:0.35px #e8e8e8;">Sample: 100 g</div>
<div style="position:absolute;left:2046px;top:274px;width:364px;height:37px;border-radius:7px;background:#666;box-shadow:0 1px 1px rgba(0,0,0,0.35);"></div>
<div style="position:absolute;left:1228.00px;width:2000px;text-align:center;top:280.84px;font-size:25px;line-height:25px;font-weight:400;color:#ececec;white-space:pre;-webkit-text-stroke:0.35px #ececec;">Edit Custom Format...</div>
<div style="position:absolute;left:1990.00px;top:340.00px;width:476.00px;height:1.50px;background:#444;"></div>
<svg style="position:absolute;left:1990px;top:383px" width="18" height="16" viewBox="0 0 18 16"><path d="M0 0 L18 0 L9 15 Z" fill="#8a8a8a"/></svg>
<div style="position:absolute;left:2023.00px;top:377.68px;font-size:24px;line-height:24px;font-weight:700;color:#dedede;white-space:pre;letter-spacing:-0.8px;">Fill</div>
<div style="position:absolute;left:2334px;top:372px;width:132px;height:42px;border-radius:7px;background:#fff;overflow:hidden;"><svg width="132" height="42"><line x1="4" y1="41" x2="128" y2="1" stroke="#f06a60" stroke-width="2"/></svg></div>
<div style="position:absolute;left:1992px;top:434px;width:472px;height:38px;border-radius:7px;background:#666;box-shadow:0 1px 1px rgba(0,0,0,0.35);"></div>
<div style="position:absolute;left:2008.50px;top:441.84px;font-size:25px;line-height:25px;font-weight:400;color:#ececec;white-space:pre;-webkit-text-stroke:0.35px #ececec;">No Fill</div>
<svg style="position:absolute;left:2438px;top:440.0px" width="20" height="26" viewBox="0 0 20 26"><path d="M4 9 L10 3 L16 9 M4 17 L10 23 L16 17" fill="none" stroke="#e6e6e6" stroke-width="2.2"/></svg>
<div style="position:absolute;left:1990.00px;top:506.50px;width:476.00px;height:1.50px;background:#444;"></div>
<div style="position:absolute;left:1990.50px;top:529.98px;font-size:24px;line-height:24px;font-weight:700;color:#dedede;white-space:pre;">Border</div>
<div style="position:absolute;left:1991px;top:566px;width:164px;height:166px;box-sizing:border-box;border-radius:10px;background:#2a2a2a;border:2px solid #474747;"></div>
<div style="position:absolute;left:1998px;top:574px;width:45.5px;height:46px;border-radius:5px;background:#545454;"></div>
<svg style="position:absolute;left:2005.00px;top:581.00px" width="30" height="30" viewBox="0 0 30 30"><rect x="1" y="1" width="28" height="28" fill="none" stroke="#ececec" stroke-width="2"/><line x1="15" y1="1" x2="15" y2="29" stroke="#7a7a7a" stroke-width="1.8"/><line x1="1" y1="15" x2="29" y2="15" stroke="#7a7a7a" stroke-width="1.8"/><line x1="0" y1="1.1" x2="30" y2="1.1" stroke="#ececec" stroke-width="2.2"/><line x1="28.9" y1="0" x2="28.9" y2="30" stroke="#ececec" stroke-width="2.2"/><line x1="30" y1="28.9" x2="0" y2="28.9" stroke="#ececec" stroke-width="2.2"/><line x1="1.1" y1="30" x2="1.1" y2="0" stroke="#ececec" stroke-width="2.2"/></svg>
<svg style="position:absolute;left:2057.20px;top:581.00px" width="30" height="30" viewBox="0 0 30 30"><rect x="1" y="1" width="28" height="28" fill="none" stroke="#464646" stroke-width="2"/><line x1="15" y1="1" x2="15" y2="29" stroke="#5c5c5c" stroke-width="1.8"/><line x1="1" y1="15" x2="29" y2="15" stroke="#5c5c5c" stroke-width="1.8"/></svg>
<svg style="position:absolute;left:2109.10px;top:581.00px" width="30" height="30" viewBox="0 0 30 30"><rect x="1" y="1" width="28" height="28" fill="none" stroke="#ececec" stroke-width="2"/><line x1="15" y1="1" x2="15" y2="29" stroke="#ececec" stroke-width="1.8"/><line x1="1" y1="15" x2="29" y2="15" stroke="#ececec" stroke-width="1.8"/><line x1="0" y1="1.1" x2="30" y2="1.1" stroke="#ececec" stroke-width="2.2"/><line x1="28.9" y1="0" x2="28.9" y2="30" stroke="#ececec" stroke-width="2.2"/><line x1="30" y1="28.9" x2="0" y2="28.9" stroke="#ececec" stroke-width="2.2"/><line x1="1.1" y1="30" x2="1.1" y2="0" stroke="#ececec" stroke-width="2.2"/></svg>
<svg style="position:absolute;left:2005.00px;top:632.80px" width="30" height="30" viewBox="0 0 30 30"><rect x="1" y="1" width="28" height="28" fill="none" stroke="#4d4d4d" stroke-width="2"/><line x1="15" y1="1" x2="15" y2="29" stroke="#4d4d4d" stroke-width="1.8"/><line x1="1" y1="15" x2="29" y2="15" stroke="#4d4d4d" stroke-width="1.8"/><line x1="1.1" y1="0" x2="1.1" y2="30" stroke="#ececec" stroke-width="2.2"/></svg>
<svg style="position:absolute;left:2057.20px;top:632.80px" width="30" height="30" viewBox="0 0 30 30"><rect x="1" y="1" width="28" height="28" fill="none" stroke="#464646" stroke-width="2"/><line x1="15" y1="1" x2="15" y2="29" stroke="#6a6a6a" stroke-width="1.8"/><line x1="1" y1="15" x2="29" y2="15" stroke="#4d4d4d" stroke-width="1.8"/></svg>
<svg style="position:absolute;left:2109.10px;top:632.80px" width="30" height="30" viewBox="0 0 30 30"><rect x="1" y="1" width="28" height="28" fill="none" stroke="#4d4d4d" stroke-width="2"/><line x1="15" y1="1" x2="15" y2="29" stroke="#4d4d4d" stroke-width="1.8"/><line x1="1" y1="15" x2="29" y2="15" stroke="#4d4d4d" stroke-width="1.8"/><line x1="28.9" y1="0" x2="28.9" y2="30" stroke="#ececec" stroke-width="2.2"/></svg>
<svg style="position:absolute;left:2005.00px;top:685.00px" width="30" height="30" viewBox="0 0 30 30"><rect x="1" y="1" width="28" height="28" fill="none" stroke="#4d4d4d" stroke-width="2"/><line x1="15" y1="1" x2="15" y2="29" stroke="#4d4d4d" stroke-width="1.8"/><line x1="1" y1="15" x2="29" y2="15" stroke="#4d4d4d" stroke-width="1.8"/><line x1="0" y1="1.1" x2="30" y2="1.1" stroke="#ececec" stroke-width="2.2"/></svg>
<svg style="position:absolute;left:2057.20px;top:685.00px" width="30" height="30" viewBox="0 0 30 30"><rect x="1" y="1" width="28" height="28" fill="none" stroke="#464646" stroke-width="2"/><line x1="15" y1="1" x2="15" y2="29" stroke="#4d4d4d" stroke-width="1.8"/><line x1="1" y1="15" x2="29" y2="15" stroke="#6a6a6a" stroke-width="1.8"/></svg>
<svg style="position:absolute;left:2109.10px;top:685.00px" width="30" height="30" viewBox="0 0 30 30"><rect x="1" y="1" width="28" height="28" fill="none" stroke="#4d4d4d" stroke-width="2"/><line x1="15" y1="1" x2="15" y2="29" stroke="#4d4d4d" stroke-width="1.8"/><line x1="1" y1="15" x2="29" y2="15" stroke="#4d4d4d" stroke-width="1.8"/><line x1="0" y1="28.9" x2="30" y2="28.9" stroke="#ececec" stroke-width="2.2"/></svg>
<div style="position:absolute;left:2186px;top:569px;width:278px;height:37px;border-radius:7px;background:#666;box-shadow:0 1px 1px rgba(0,0,0,0.35);"></div>
<div style="position:absolute;left:2205.00px;top:575.84px;font-size:25px;line-height:25px;font-weight:400;color:#ececec;white-space:pre;-webkit-text-stroke:0.35px #ececec;">Border Styles</div>
<svg style="position:absolute;left:2437px;top:578.5px" width="22" height="18" viewBox="0 0 22 18"><path d="M4 5.5 L11 12.5 L18 5.5" fill="none" stroke="#e6e6e6" stroke-width="2.4"/></svg>
<div style="position:absolute;left:2188.5px;top:630px;width:275.5px;height:37.5px;border-radius:7px;background:#666;box-shadow:0 1px 1px rgba(0,0,0,0.35);"></div>
<svg style="position:absolute;left:2438px;top:635.75px" width="20" height="26" viewBox="0 0 20 26"><path d="M4 9 L10 3 L16 9 M4 17 L10 23 L16 17" fill="none" stroke="#e6e6e6" stroke-width="2.2"/></svg>
<div style="position:absolute;left:2212.00px;top:646.00px;width:200.00px;height:6.00px;background:#e6e6e6;"></div>
<div style="position:absolute;left:2186px;top:691px;width:131.5px;height:40.5px;border-radius:7px;background:#5a5a5a;overflow:hidden;box-shadow:0 1px 1px rgba(0,0,0,0.35);"><div style="position:absolute;left:0;top:0;width:91px;height:40.5px;background:#9b978d;border:1px solid #bdb9b0;border-right:1px solid #c8c4bc;box-sizing:border-box;border-radius:7px 0 0 7px;"></div></div>
<div style="position:absolute;left:2283px;top:698px;width:26px;height:26px;border-radius:50%;background:conic-gradient(from 0deg,#ff4040,#ff40c0,#9040ff,#4060ff,#40d0ff,#40ff80,#a0ff40,#ffe040,#ff9040,#ff4040);"></div>
<div style="position:absolute;left:2283px;top:698px;width:26px;height:26px;border-radius:50%;background:radial-gradient(circle,rgba(255,255,255,1) 0,rgba(255,255,255,0.6) 35%,rgba(255,255,255,0) 75%);"></div>
<div style="position:absolute;left:2335.50px;top:691.50px;width:100.00px;height:38.00px;background:#363636;border:1px solid #4a4a4a;box-sizing:border-box;"></div>
<div style="position:absolute;left:1427.50px;width:1000px;text-align:right;top:698.49px;font-size:26px;line-height:26px;font-weight:400;color:#f0f0f0;white-space:pre;-webkit-text-stroke:0.35px #f0f0f0;">0,5 pt</div>
<div style="position:absolute;left:2443px;top:691px;width:21px;height:40px;border-radius:7px;background:#666;"></div>
<svg style="position:absolute;left:2443px;top:697px" width="21" height="28" viewBox="0 0 21 28"><path d="M5 9 L10.5 4 L16 9 M5 19 L10.5 24 L16 19" fill="none" stroke="#e6e6e6" stroke-width="2.2"/></svg>
<div style="position:absolute;left:1990.00px;top:771.00px;width:476.00px;height:1.50px;background:#444;"></div>
<div style="position:absolute;left:2034.5px;top:804.5px;width:388px;height:37.5px;border-radius:7px;background:#666;box-shadow:0 1px 1px rgba(0,0,0,0.35);"></div>
<div style="position:absolute;left:1228.50px;width:2000px;text-align:center;top:811.34px;font-size:25px;line-height:25px;font-weight:400;color:#ececec;white-space:pre;letter-spacing:0.3px;-webkit-text-stroke:0.35px #ececec;">Conditional Highlighting...</div>
<div style="position:absolute;left:1990.00px;top:873.00px;width:476.00px;height:1.50px;background:#444;"></div>
</body></html>
